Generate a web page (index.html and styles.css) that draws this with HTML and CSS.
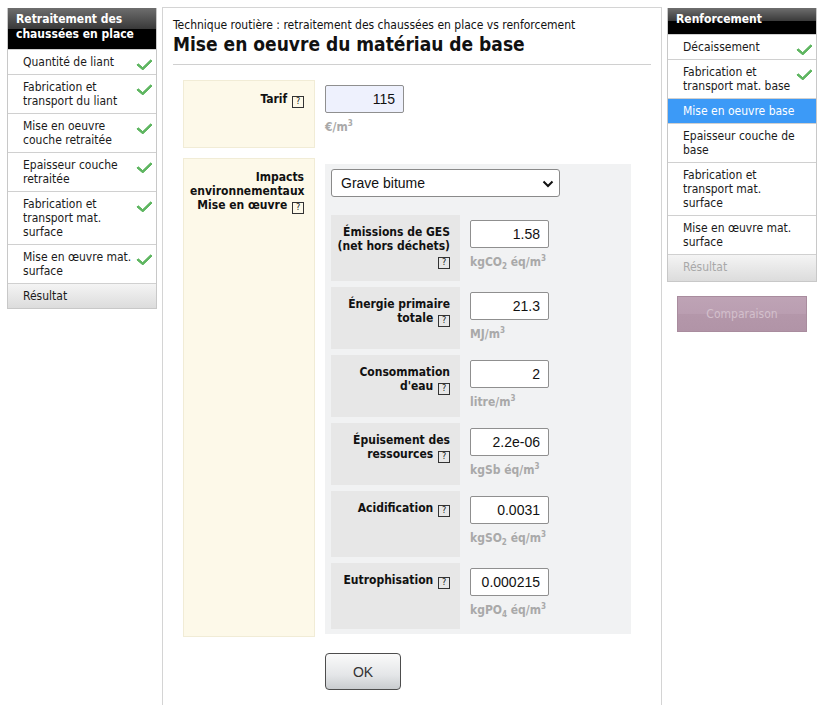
FILE: index.html
```html
<!DOCTYPE html>
<html lang="fr">
<head>
    <meta charset="UTF-8">
    <title>Mise en oeuvre du matériau de base</title>
    <link rel="stylesheet" href="styles.css">
</head>
<body>
    <div class="page">
        <!-- colonne de gauche : retraitement -->
        <div class="sidebar">
            <div class="side-head">Retraitement des chaussées en place</div>
            <div class="side-item done">Quantité de liant</div>
            <div class="side-item done">Fabrication et transport du liant</div>
            <div class="side-item done">Mise en oeuvre couche retraitée</div>
            <div class="side-item done">Epaisseur couche retraitée</div>
            <div class="side-item done">Fabrication et transport mat. surface</div>
            <div class="side-item done">Mise en œuvre mat. surface</div>
            <div class="side-item result">Résultat</div>
        </div>

        <div class="main">
            <div class="subtitle">Technique routière : retraitement des chaussées en place vs renforcement</div>
            <h1 class="title">Mise en oeuvre du matériau de base</h1>

            <div class="form-row">
                <div class="form-label">Tarif <span class="help">?</span></div>
                <div class="form-field">
                    <input class="num tarif" type="text" value="115">
                    <div class="unit">€/m<sup>3</sup></div>
                </div>
            </div>

            <div class="form-row">
                <div class="form-label">Impacts environnementaux Mise en œuvre <span class="help">?</span></div>
                <div class="form-field">
                    <div class="impacts">
                        <div class="select-wrap">
                            <select class="material">
                                <option>Grave bitume</option>
                            </select>
                            <svg class="chevron" width="12" height="8" viewBox="0 0 12 8"><path d="M1.5 1.5 6 6l4.5-4.5" fill="none" stroke="#111" stroke-width="2"/></svg>
                        </div>

                        <div class="impact">
                            <div class="impact-label">Émissions de GES<br>(net hors déchets)<br><span class="help">?</span></div>
                            <div class="impact-field">
                                <input class="num" type="text" value="1.58">
                                <div class="unit">kgCO<sub>2</sub> éq/m<sup>3</sup></div>
                            </div>
                        </div>
                        <div class="impact">
                            <div class="impact-label">Énergie primaire totale <span class="help">?</span></div>
                            <div class="impact-field">
                                <input class="num" type="text" value="21.3">
                                <div class="unit">MJ/m<sup>3</sup></div>
                            </div>
                        </div>
                        <div class="impact">
                            <div class="impact-label">Consommation d'eau <span class="help">?</span></div>
                            <div class="impact-field">
                                <input class="num" type="text" value="2">
                                <div class="unit">litre/m<sup>3</sup></div>
                            </div>
                        </div>
                        <div class="impact">
                            <div class="impact-label">Épuisement des ressources <span class="help">?</span></div>
                            <div class="impact-field">
                                <input class="num" type="text" value="2.2e-06">
                                <div class="unit">kgSb éq/m<sup>3</sup></div>
                            </div>
                        </div>
                        <div class="impact">
                            <div class="impact-label">Acidification <span class="help">?</span></div>
                            <div class="impact-field">
                                <input class="num" type="text" value="0.0031">
                                <div class="unit">kgSO<sub>2</sub> éq/m<sup>3</sup></div>
                            </div>
                        </div>
                        <div class="impact">
                            <div class="impact-label">Eutrophisation <span class="help">?</span></div>
                            <div class="impact-field">
                                <input class="num" type="text" value="0.000215">
                                <div class="unit">kgPO<sub>4</sub> éq/m<sup>3</sup></div>
                            </div>
                        </div>
                    </div>
                </div>
            </div>

            <div class="actions">
                <button class="ok-btn">OK</button>
            </div>
        </div>

        <!-- colonne de droite : renforcement -->
        <div class="right-col">
            <div class="sidebar">
                <div class="side-head">Renforcement</div>
                <div class="side-item done">Décaissement</div>
                <div class="side-item done">Fabrication et transport mat. base</div>
                <div class="side-item current">Mise en oeuvre base</div>
                <div class="side-item">Epaisseur couche de base</div>
                <div class="side-item">Fabrication et transport mat. surface</div>
                <div class="side-item">Mise en œuvre mat. surface</div>
                <div class="side-item result disabled">Résultat</div>
            </div>
            <button class="compare-btn" disabled>Comparaison</button>
        </div>
    </div>
</body>
</html>
```

FILE: styles.css
```css
* {
    margin: 0;
    padding: 0;
    box-sizing: border-box;
}

body {
    font-family: 'DejaVu Sans Condensed', 'DejaVu Sans', sans-serif;
    font-size: 12px;
    color: #111;
    background: white;
}

.page {
    display: flex;
    align-items: flex-start;
    padding: 7px 0 0 7px;
    height: 705px;
}

/* barres latérales */
.sidebar {
    width: 150px;
    margin-top: 1px;
    border: 1px solid #c8c8c8;
    border-top: none;
    background: white;
}

.side-head {
    color: white;
    font-weight: bold;
    line-height: 15px;
    padding: 4px 8px 7px 8px;
    background: linear-gradient(#6e6e6e, #3a3a3a 50%, #000 50%, #000);
}

.side-item {
    position: relative;
    line-height: 14px;
    padding: 5px 16px 5px 15px;
    border-top: 1px solid #d0d0d0;
    color: #1a1a1a;
}

.side-item.done {
    padding-right: 24px;
}

.side-item.done::after {
    content: "";
    position: absolute;
    right: 7px;
    top: 6px;
    width: 6px;
    height: 11px;
    border: solid #5fb661;
    border-width: 0 3px 3px 0;
    transform: rotate(40deg) skewX(-6deg);
    border-radius: 1px;
}

.side-item.current {
    background: #3c9af7;
    color: white;
}

.side-item.result {
    background: linear-gradient(#f4f4f4, #dcdcdc);
}

.side-item.disabled {
    color: #a8a8a8;
    padding-bottom: 7px;
}

/* zone centrale */
.main {
    width: 500px;
    margin-left: 5px;
    height: 100%;
    border: 1px solid #d4d4d4;
    border-bottom: none;
    padding: 10px 10px 0 10px;
}

.subtitle {
    font-size: 12px;
    line-height: 14px;
}

.title {
    font-size: 19px;
    line-height: 22px;
    margin-top: 1px;
    padding-bottom: 9px;
    border-bottom: 1px solid #d0d0d0;
    margin-bottom: 15px;
}

.form-row {
    display: flex;
    align-items: stretch;
    margin-left: 10px;
    margin-bottom: 10px;
}

.form-label {
    width: 132px;
    flex-shrink: 0;
    background: #fdf9e9;
    border: 1px solid #f1ecd6;
    text-align: right;
    font-weight: bold;
    line-height: 14px;
    padding: 11px 10px 10px 6px;
}

.form-field {
    margin-left: 10px;
    padding: 5px 0 3px 0;
    min-height: 68px;
}

.help {
    display: inline-block;
    width: 12px;
    height: 12px;
    border: 1px solid #333;
    font-family: 'DejaVu Sans', sans-serif;
    font-size: 8px;
    line-height: 10px;
    text-align: center;
    font-weight: normal;
    vertical-align: -1px;
    margin-left: 1px;
}

.num {
    display: block;
    width: 79px;
    height: 28px;
    border: 1px solid #8f8f8f;
    border-radius: 2px;
    background: white;
    font-family: 'Liberation Sans', Arial, sans-serif;
    font-size: 14px;
    text-align: right;
    padding: 0 8px 0 4px;
    color: #111;
}

.num.tarif {
    background: #eef1fd;
}

.unit {
    color: #a9a9a9;
    font-weight: bold;
    font-size: 12px;
    line-height: 16px;
    margin-top: 6px;
}

.unit sup {
    font-size: 8px;
    line-height: 0;
    vertical-align: 5px;
}

.unit sub {
    font-size: 8px;
    line-height: 0;
    vertical-align: -3px;
}

.impacts {
    width: 306px;
    background: #f1f2f3;
    padding: 5px 6px 5px 6px;
    margin-top: 1px;
}

.select-wrap {
    position: relative;
    width: 229px;
    margin-bottom: 18px;
}

.material {
    appearance: none;
    -webkit-appearance: none;
    display: block;
    width: 229px;
    height: 28px;
    border: 1px solid #8a8a8a;
    border-radius: 3px;
    background: white;
    font-family: 'Liberation Sans', Arial, sans-serif;
    font-size: 14px;
    padding-left: 9px;
    color: #111;
}

.chevron {
    position: absolute;
    right: 6px;
    top: 11px;
    pointer-events: none;
}

.impact {
    display: flex;
    margin-bottom: 6px;
}

.impact:last-child {
    margin-bottom: 0;
}

.impact-label {
    width: 129px;
    flex-shrink: 0;
    background: #e7e7e7;
    text-align: right;
    font-weight: bold;
    line-height: 14px;
    padding: 10px 10px 6px 4px;
}

.impact-field {
    margin-left: 10px;
    padding: 5px 0 7px 0;
}

.impact-field:has(sub) {
    padding-bottom: 11px;
}

.actions {
    margin-left: 152px;
    padding-top: 6px;
}

.ok-btn {
    width: 76px;
    height: 37px;
    border: 1px solid #4d4d4d;
    border-radius: 4px;
    background: linear-gradient(#fafafa, #e4e6e8 60%, #c9cccf);
    font-family: 'Liberation Sans', Arial, sans-serif;
    font-size: 14px;
    color: #333;
}

/* colonne de droite */
.right-col {
    margin-left: 5px;
}

.compare-btn {
    display: block;
    width: 130px;
    height: 36px;
    margin: 14px 0 0 10px;
    border: 1px solid #a98c9e;
    background: linear-gradient(#bea3b5, #ba9eb1 50%, #b497aa 50%, #b194a7);
    color: #d3c0cc;
    font-family: 'DejaVu Sans Condensed', 'DejaVu Sans', sans-serif;
    font-size: 12px;
}
```
